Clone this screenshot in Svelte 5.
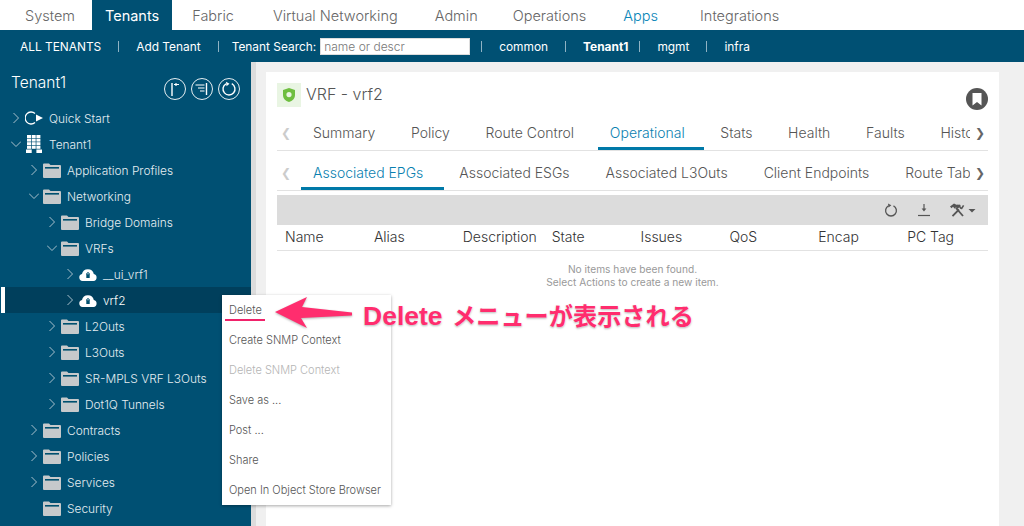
<script lang="ts">
  // gap = extra space before the tab, the real tabs are not evenly spaced
  const topTabs = [
    { label: 'System', gap: 0 },
    { label: 'Tenants', gap: -6 },
    { label: 'Fabric', gap: -3 },
    { label: 'Virtual Networking', gap: 3 },
    { label: 'Admin', gap: 1 },
    { label: 'Operations', gap: -1 },
    { label: 'Apps', gap: 1 },
    { label: 'Integrations', gap: 6 }
  ];

  const subLinks = [
    { label: 'common' },
    { label: 'Tenant1', current: true },
    { label: 'mgmt' },
    { label: 'infra' }
  ];

  // depth drives the indent, open: true/false gives the chevron, undefined has none
  const tree = [
    { label: 'Quick Start', depth: 0, icon: 'start', open: false },
    { label: 'Tenant1', depth: 0, icon: 'building', open: true },
    { label: 'Application Profiles', depth: 1, icon: 'folder', open: false },
    { label: 'Networking', depth: 1, icon: 'folder', open: true },
    { label: 'Bridge Domains', depth: 2, icon: 'folder', open: false },
    { label: 'VRFs', depth: 2, icon: 'folder', open: true },
    { label: '__ui_vrf1', depth: 3, icon: 'cloud', open: false },
    { label: 'vrf2', depth: 3, icon: 'cloud', open: false, selected: true },
    { label: 'L2Outs', depth: 2, icon: 'folder', open: false },
    { label: 'L3Outs', depth: 2, icon: 'folder', open: false },
    { label: 'SR-MPLS VRF L3Outs', depth: 2, icon: 'folder', open: false },
    { label: 'Dot1Q Tunnels', depth: 2, icon: 'folder', open: false },
    { label: 'Contracts', depth: 1, icon: 'folder', open: false },
    { label: 'Policies', depth: 1, icon: 'folder', open: false },
    { label: 'Services', depth: 1, icon: 'folder', open: false },
    { label: 'Security', depth: 1, icon: 'folder' }
  ];

  const pageTabs = ['Summary', 'Policy', 'Route Control', 'Operational', 'Stats', 'Health', 'Faults', 'History'];
  const subTabs = ['Associated EPGs', 'Associated ESGs', 'Associated L3Outs', 'Client Endpoints', 'Route Table'];
  const columns = ['Name', 'Alias', 'Description', 'State', 'Issues', 'QoS', 'Encap', 'PC Tag'];

  const menu = [
    { label: 'Delete' },
    { label: 'Create SNMP Context' },
    { label: 'Delete SNMP Context', disabled: true },
    { label: 'Save as ...' },
    { label: 'Post ...' },
    { label: 'Share' },
    { label: 'Open In Object Store Browser' }
  ];

  const floors = [0, 3.6, 7.2, 10.8];
  const bays = [2, 6.700, 11.400];
</script>

<div class="page">
  <nav class="top">
    {#each topTabs as tab}
      <span
        class="top-tab"
        class:active={tab.label === 'Tenants'}
        class:apps={tab.label === 'Apps'}
        style:margin-left="{tab.gap}px"
      >{tab.label}</span>
    {/each}
  </nav>

  <div class="subnav">
    <span>ALL TENANTS</span>
    <i></i>
    <span>Add Tenant</span>
    <i></i>
    <span class="search">Tenant Search:<input placeholder="name or descr" /></span>
    <i></i>
    {#each subLinks as link, n}
      <span class:current={link.current}>{link.label}</span>
      {#if n < subLinks.length - 1}<i class:tight={link.current}></i>{/if}
    {/each}
  </div>

  <div class="body">
    <aside class="side">
      <div class="side-head">
        <h2>Tenant1</h2>
        <div class="round-btns">
          <svg viewBox="0 0 22 22" width="22" height="22" fill="none" stroke="#fff">
            <circle cx="11" cy="11" r="10.500" stroke-width="0.900" />
            <path d="M8 18V5" stroke-width="1.400" />
            <path d="M10 6.500h5M12 5v3" stroke-width="1.200" />
          </svg>
          <svg viewBox="0 0 22 22" width="22" height="22" fill="none" stroke="#fff">
            <circle cx="11" cy="11" r="10.500" stroke-width="0.900" />
            <path d="M15.500 5v12" stroke-width="1.400" />
            <path d="M4.500 7h9M7 10h6.500M9 13h4.500" stroke-width="1.200" />
          </svg>
          <svg viewBox="0 0 22 22" width="22" height="22" fill="none" stroke="#fff">
            <circle cx="11" cy="11" r="10.500" stroke-width="0.900" />
            <path d="M13.800 5.700A6 6 0 1 1 8 5.800" stroke-width="1.400" />
            <path d="M8 3.800l3.500 2L8.500 8.200z" fill="#fff" stroke="none" />
          </svg>
        </div>
      </div>

      <ul class="tree">
        {#each tree as row}
          <li class="row" class:selected={row.selected} style:padding-left="{11 + row.depth * 18}px">
            <span class="chev">
              {#if row.open === true}
                <svg viewBox="0 0 10 10" width="10" height="10" fill="none" stroke="#a9c0cc" stroke-width="1"><path d="M0 2.500l5 5 5-5" /></svg>
              {:else if row.open === false}
                <svg viewBox="0 0 10 10" width="10" height="10" fill="none" stroke="#a9c0cc" stroke-width="1"><path d="M2.500 0l5 5-5 5" /></svg>
              {/if}
            </span>
            {#if row.icon === 'folder'}
              <svg class="ico" viewBox="0 0 18 15" width="18" height="15">
                <path d="M0 1.500Q0 .5 1 .5h5l1.500 1.500H17q1 0 1 1V14q0 1-1 1H1q-1 0-1-1z" fill="#c6c9cb" />
                <rect x="2" y="4" width="14" height="1.600" fill="#00506f" />
              </svg>
            {:else if row.icon === 'cloud'}
              <svg class="ico" viewBox="0 0 18 13" width="18" height="13">
                <path d="M3.500 13A3.500 3.500 0 0 1 3 6.100 6 6 0 0 1 14.800 6.100 3.500 3.500 0 0 1 14.500 13z" fill="#fff" />
                <rect x="7.300" y="6.400" width="3.400" height="3.600" fill="#00506f" />
                <circle cx="9" cy="6" r="1.300" fill="none" stroke="#00506f" />
              </svg>
            {:else if row.icon === 'building'}
              <svg class="ico" viewBox="0 0 18 18" width="18" height="18" fill="#fff">
                {#each floors as y}
                  {#each bays as x}
                    <rect {x} {y} width="4" height="3" />
                  {/each}
                {/each}
                <path d="M1 14.400h5.700V18H1zM11.400 14.400H17V18h-5.600z" />
              </svg>
            {:else}
              <svg class="ico" viewBox="0 0 18 14" width="18" height="14" fill="none" stroke="#fff" stroke-width="1.300">
                <path d="M10 2.400A6 6 0 1 0 10 11.600" />
                <path d="M11 3.500L18 7l-7 3.500z" fill="#fff" stroke="none" />
              </svg>
            {/if}
            <span class="label">{row.label}</span>
          </li>
        {/each}
      </ul>
    </aside>
    <div class="splitter"></div>

    <main class="workspace">
      <section class="panel">
        <header class="panel-head">
          <span class="badge">
            <svg viewBox="0 0 12 14" width="12" height="14">
              <path fill-rule="evenodd" d="M6 0l6 2v5c0 3.500-2.500 6-6 7-3.500-1-6-3.500-6-7V2zM6 4a2.600 2.600 0 1 0 0 5.200A2.600 2.600 0 0 0 6 4z" fill="#6ebe3f" />
            </svg>
          </span>
          <h1>VRF - vrf2</h1>
          <svg class="mark" viewBox="0 0 22 22" width="22" height="22">
            <circle cx="11" cy="11" r="11" fill="#555" />
            <path d="M6.500 5h9v12.500L11 14l-4.500 3.500z" fill="#fff" />
          </svg>
        </header>

        <div class="tabs first">
          <span class="arrow">❮</span>
          <div class="tab-list">
            {#each pageTabs as tab}
              <span class="tab" class:on={tab === 'Operational'}>{tab}</span>
            {/each}
          </div>
          <span class="arrow right">❯</span>
        </div>

        <div class="tabs second">
          <span class="arrow">❮</span>
          <div class="tab-list">
            {#each subTabs as tab}
              <span class="tab" class:on={tab === 'Associated EPGs'}>{tab}</span>
            {/each}
          </div>
          <span class="arrow right">❯</span>
        </div>

        <div class="toolbar">
          <svg viewBox="0 0 14 14" width="14" height="14" fill="none" stroke="#555" stroke-width="1.300">
            <path d="M9.500 2.800A5.400 5.400 0 1 1 4.500 2.800" />
            <path d="M4 0.600l3.400 1.700-2.900 2.300z" fill="#555" stroke="none" />
          </svg>
          <svg viewBox="0 0 14 14" width="14" height="14" fill="none" stroke="#555" stroke-width="1.200">
            <path d="M7 1v6" />
            <path d="M4.600 5.500h4.800L7 8.500z" fill="#555" stroke="none" />
            <path d="M1 12.500h12" />
          </svg>
          <svg viewBox="0 0 26 14" width="26" height="14" fill="#555">
            <path d="M0 3.500L4 .5l2.500 1.300L8.500 1.500 10 3.500 7.500 6 6 4.300 4.800 5.800 3 3.700 1.500 5.200z" />
            <path d="M6 5l7 8" fill="none" stroke="#555" stroke-width="1.800" />
            <path d="M2.500 13.200l6.500-6.700" fill="none" stroke="#555" stroke-width="1.800" />
            <path d="M9.800 1.800a2.800 2.800 0 0 0 1.900 3.600l1.900-3" fill="none" stroke="#555" stroke-width="1.600" />
            <path d="M18.500 6h7l-3.500 3.500z" />
          </svg>
        </div>

        <div class="thead">
          {#each columns as col}
            <span>{col}</span>
          {/each}
        </div>

        <div class="empty">
          <p>No items have been found.</p>
          <p>Select Actions to create a new item.</p>
        </div>
      </section>
    </main>
  </div>

  <ul class="menu">
    {#each menu as item}
      <li class:disabled={item.disabled}>{item.label}</li>
    {/each}
  </ul>

  <div class="note">
    <span class="underline"></span>
    <svg class="pointer" viewBox="0 0 80 40" width="80" height="40">
      <path d="M0 17L32 2 27 12 77 17.500 77 20.500 26 23 32 33z" fill="#ff2d6e" />
    </svg>
    <span class="note-text"><b>Delete</b> メニューが表示される</span>
  </div>
</div>

<style>
  :global(body) {
    margin: 0;
    background: #f0f0f0;
    font-family: Inter, "Liberation Sans", sans-serif;
    overflow: hidden;
  }

  ul { list-style: none; margin: 0; padding: 0; }
  p, h1, h2 { margin: 0; font-weight: 400; }

  .page {
    position: relative;
    width: 1024px;
    height: 526px;
    overflow: hidden;
    display: flex;
    flex-direction: column;
  }

  /* top nav */
  .top {
    height: 30px;
    flex: none;
    background: #fff;
    display: flex;
    align-items: stretch;
    padding-left: 12px;
    gap: 10px;
  }

  .top-tab {
    display: flex;
    align-items: center;
    padding: 0 13px;
    font-size: 14.500px;
    color: #666;
    font-weight: 300;
  }

  .top-tab.active { background: #005073; color: #fff; font-weight: 400; }
  .top-tab.apps { color: #0a86b8; }

  .subnav {
    height: 32px;
    flex: none;
    background: #005073;
    color: #fff;
    display: flex;
    align-items: center;
    gap: 17px;
    padding-left: 20px;
    font-size: 11.900px;
  }

  .subnav i { width: 1px; height: 11px; background: #8fb3c4; }
  .subnav i.tight { margin-left: -6px; }
  .subnav .current { font-weight: 700; }

  .search { display: flex; align-items: center; gap: 4px; margin: 0 -6px 0 -4px; }

  .search input {
    width: 150px;
    height: 17px;
    box-sizing: border-box;
    border: 1px solid #ddd;
    background: #fff;
    padding: 0 3px;
    font: 300 12px Inter, sans-serif;
    color: #666;
    outline: none;
  }

  .search input::placeholder { color: #777; opacity: 1; }

  .body { flex: 1; min-height: 0; display: flex; }

  /* tree */
  .side {
    width: 251px;
    flex: none;
    background: #005073;
    color: #e4edf1;
    padding-top: 10px;
    box-sizing: border-box;
  }

  .side-head {
    height: 33px;
    display: flex;
    padding: 0 11px;
    justify-content: space-between;
    align-items: flex-start;
  }

  .side-head h2 { font-size: 15.500px; font-weight: 300; color: #fff; line-height: 22px; }

  .round-btns { display: flex; gap: 5px; margin-top: 6px; }

  .row {
    height: 26px;
    display: flex;
    align-items: center;
    font-size: 11.900px;
    font-weight: 300;
    white-space: nowrap;
  }

  .row.selected { background: #003f5c; box-shadow: inset 1px 0 0 #005073, inset 5px 0 0 #fff; color: #fff; }

  .chev { width: 14px; flex: none; display: flex; align-items: center; }
  .ico { flex: none; }
  .label { margin-left: 6px; }

  .splitter { width: 5px; flex: none; background: #dcdcdc; }

  /* main panel */
  .workspace { flex: 1; min-width: 0; padding: 10px 25px 0 10px; }

  .panel {
    background: #fff;
    height: 100%;
    padding: 11px 11px 0;
    box-sizing: border-box;
  }

  .panel-head { height: 24px; display: flex; align-items: center; gap: 5px; margin-bottom: 9px; }
  .panel-head h1 { font-size: 16px; font-weight: 300; color: #555; margin-top: -2px; }

  .badge {
    width: 24px;
    height: 24px;
    background: #e9f5e3;
    display: flex;
    align-items: center;
    justify-content: center;
  }

  .mark { margin: 4px 0 -4px auto; }

  .tabs {
    height: 34px;
    display: flex;
    align-items: stretch;
    border-bottom: 1px solid #e2e2e2;
    margin-bottom: 5px;
  }

  .tab-list { flex: 1; min-width: 0; display: flex; overflow: hidden; }

  .arrow {
    width: 24px;
    flex: none;
    display: flex;
    align-items: center;
    padding: 0 0 0 4px;
    box-sizing: border-box;
    font-size: 12px;
    color: #ccc;
    font-family: "DejaVu Sans", sans-serif;
  }

  .arrow.right { width: 18px; padding-left: 5px; color: #666; }

  .tab {
    flex: none;
    display: flex;
    align-items: center;
    padding: 1px 19px 0 12px;
    margin-right: 4.700px;
    font-size: 14px;
    font-weight: 300;
    color: #555;
    white-space: nowrap;
    border-bottom: 3px solid transparent;
  }

  .tab.on { color: #0a7fb0; border-bottom-color: #0079a8; }
  .tabs.second .tab { padding-right: 21px; margin-right: 3px; }

  .toolbar {
    height: 30px;
    background: #dcdcdc;
    display: flex;
    align-items: center;
    justify-content: flex-end;
    gap: 19px;
    padding-right: 12px;
    margin-top: -1px;
  }

  .thead {
    height: 25px;
    display: grid;
    grid-template-columns: repeat(8, 1fr);
    align-items: center;
    border-bottom: 1px solid #e2e2e2;
    font-size: 14px;
    font-weight: 300;
    color: #333;
  }

  .thead span { padding-left: 8px; margin-top: -2px; }

  .empty { text-align: center; font-size: 10.200px; font-weight: 300; color: #999; line-height: 13px; padding-top: 12px; }

  /* context menu over the tree */
  .menu {
    position: absolute;
    left: 222px;
    top: 295px;
    width: 169px;
    height: 210px;
    background: #fff;
    box-shadow: 0 1px 3px rgba(0, 0, 0, 0.35);
  }

  .menu li {
    height: 30px;
    display: flex;
    align-items: center;
    padding-left: 7px;
    font-size: 11px;
    font-weight: 300;
    color: #555;
    white-space: nowrap;
  }

  .menu li.disabled { color: #b5b5b5; }

  /* screenshot annotation */
  .note .underline {
    position: absolute;
    left: 225px;
    top: 319px;
    width: 40px;
    height: 2px;
    background: #f0226a;
  }

  .pointer { position: absolute; left: 275px; top: 295px; filter: drop-shadow(0 1px 1px rgba(0, 0, 0, 0.3)); }

  .note-text {
    position: absolute;
    left: 363px;
    top: 299px;
    font-family: "Noto Sans CJK JP", sans-serif;
    font-weight: 700;
    font-size: 24.200px;
    line-height: 32px;
    color: #ff2d6e;
    white-space: nowrap;
    text-shadow: 0 0 2px #fff, 0 1px 2px rgba(0, 0, 0, 0.35);
  }

  .note-text b { font-family: "Liberation Sans", sans-serif; font-size: 26.500px; margin-right: 4px; }
</style>
